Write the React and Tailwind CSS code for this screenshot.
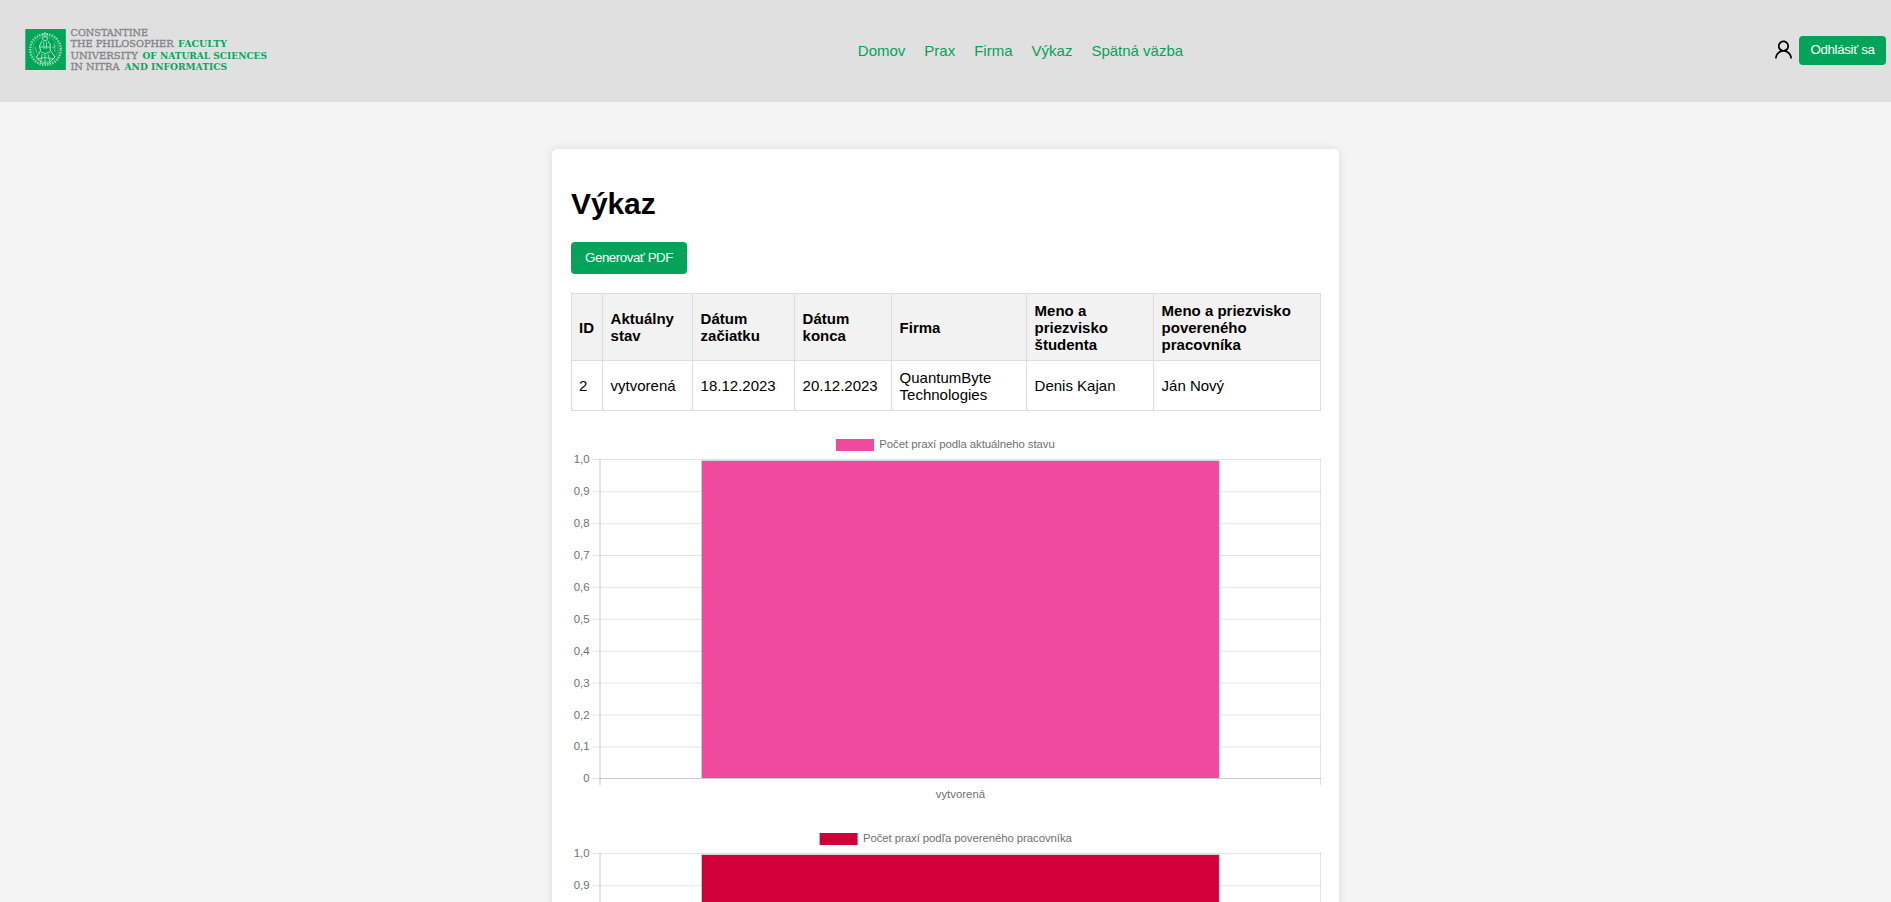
import React from 'react';
import { AiOutlineUser } from 'react-icons/ai';

const NAV = ['Domov', 'Prax', 'Firma', 'Výkaz', 'Spätná väzba'];

const COLUMNS = [
  'ID',
  'Aktuálny stav',
  'Dátum začiatku',
  'Dátum konca',
  'Firma',
  'Meno a priezvisko študenta',
  'Meno a priezvisko povereného pracovníka',
];

const ROWS = [
  ['2', 'vytvorená', '18.12.2023', '20.12.2023', 'QuantumByte Technologies', 'Denis Kajan', 'Ján Nový'],
];

const TICKS = ['1,0', '0,9', '0,8', '0,7', '0,6', '0,5', '0,4', '0,3', '0,2', '0,1', '0'];

const LOGO_TEXT = [
  { x: 45.5, y: 10, w: 77.5, green: false, text: 'CONSTANTINE' },
  { x: 45.5, y: 21.2, w: 103, green: false, text: 'THE PHILOSOPHER' },
  { x: 153, y: 21.2, w: 49, green: true, text: 'FACULTY' },
  { x: 45.5, y: 32.6, w: 67.5, green: false, text: 'UNIVERSITY' },
  { x: 117.5, y: 32.6, w: 124.5, green: true, text: 'OF NATURAL SCIENCES' },
  { x: 45.5, y: 43.8, w: 49, green: false, text: 'IN NITRA' },
  { x: 99.5, y: 43.8, w: 102.5, green: true, text: 'AND INFORMATICS' },
];

function Logo() {
  return (
    <svg width="250" height="50" viewBox="0 0 250 50" className="block overflow-visible">
      <rect x="0.3" y="3" width="40.5" height="41" fill="#00a658" />
      <g fill="none" stroke="#d5f0e0">
        <circle cx="20.5" cy="23.5" r="15.3" strokeWidth="2.6" strokeDasharray="1.5 1.1" opacity="0.65" />
        <circle cx="20.5" cy="23.5" r="12.6" strokeWidth="0.5" opacity="0.5" />
        <circle cx="20" cy="12.5" r="2.4" strokeWidth="1" opacity="0.85" />
        <path d="M17 9.5 L20 6.5 L23 9.5 M17 15 L14.5 20 L15.5 25 L11.5 31 L16 36 M23 15 L25.5 19 L25 24 L30 31 L25 36" strokeWidth="1" opacity="0.85" />
        <path d="M18.5 16 L19 23 M21.5 16 L21.5 23 M15 21 H25 M16 26 Q20 29 25 26 M17 28 L16 36 M20 28 V37 M23 28 L25 36 M12 33 Q20 30 29 33 M15 37 H26" strokeWidth="0.9" opacity="0.75" />
        <path d="M10 21 L12 27 M29 17 L30 26 M27 22 L31 20" strokeWidth="0.8" opacity="0.6" />
      </g>
      {LOGO_TEXT.map((t) => (
        <text
          key={t.text}
          x={t.x}
          y={t.y}
          textLength={t.w}
          lengthAdjust="spacingAndGlyphs"
          fontFamily="'DejaVu Serif', serif"
          fontWeight={t.green ? 700 : 400}
          fontSize="9.7"
          fill={t.green ? '#0aa45c' : '#85868a'}
          stroke={t.green ? 'none' : '#85868a'}
          strokeWidth="0.35"
        >
          {t.text}
        </text>
      ))}
    </svg>
  );
}

function BarChart({ title, color, label, legendX, titleWidth }) {
  const top = 28.5;
  const step = 31.9;
  const bottom = 347.5;
  return (
    <svg
      width="750"
      height="375"
      viewBox="0 0 750 375"
      className="block overflow-visible"
      fontFamily="'Liberation Sans', Arial, sans-serif"
      fontSize="11.4"
      fill="#707070"
    >
      <rect x={legendX} y="8" width="38" height="12" fill={color} />
      <text x={legendX + 43.3} y="17" textLength={titleWidth}>{title}</text>
      {TICKS.map((t, i) => {
        const y = i === 0 ? top : i === 10 ? bottom : top + step * i + 0.3;
        return (
          <g key={t}>
            <rect x="21.5" y={y - 0.5} width="728.5" height="1" fill="#000" fillOpacity="0.1" />
            <text x="18.5" y={y + 3.5} textAnchor="end">{t}</text>
          </g>
        );
      })}
      <rect x="28" y={top - 0.5} width="2" height="326.5" fill="#000" fillOpacity="0.1" />
      <rect x="749" y={top - 0.5} width="1" height="326.5" fill="#000" fillOpacity="0.1" />
      <rect x="28.5" y={bottom - 0.5} width="721.5" height="1" fill="#000" fillOpacity="0.1" />
      <rect x="130" y={top + 0.4} width="518.6" height={bottom - top - 0.9} fill="#000" fillOpacity="0.16" />
      <rect x="130.9" y={top + 1.5} width="517" height={bottom - top - 2} fill={color} />
      <text x="389.4" y="367" textAnchor="middle">{label}</text>
    </svg>
  );
}

export default function App() {
  return (
    <div className="flex h-[902px] flex-col overflow-hidden bg-[#f4f4f4] font-['Liberation_Sans',Arial,sans-serif] text-[15px] leading-[17px] text-black">
      <header className="grid h-[102px] shrink-0 grid-cols-[1fr_auto_1fr] items-center bg-[#e0e0e0] pr-[5px] pl-[25px]">
        <div>
          <Logo />
        </div>
        <nav className="flex gap-[19px] pb-[2px] pl-[130px] text-[#03a359]">
          {NAV.map((n) => (
            <a key={n} href="#">{n}</a>
          ))}
        </nav>
        <div className="flex items-center justify-end pb-[2px]">
          <AiOutlineUser className="mr-[4px] mb-[2px] size-[23px]" />
          <button className="h-[29px] w-[87px] rounded-[4px] bg-[#03a359] pb-[1px] text-[13.3px] tracking-[-0.35px] text-white">Odhlásiť sa</button>
        </div>
      </header>

      <main className="mt-[47px] h-[1100px] w-[787px] shrink-0 self-center rounded-[5px] bg-white px-[19px] pt-[37px] shadow-[0_0_10px_rgba(0,0,0,0.1)]">
        <h1 className="text-[30px] leading-[36px] font-bold tracking-[-0.1px]">Výkaz</h1>
        <button className="mt-[20px] block h-[32px] w-[116px] rounded-[4px] bg-[#03a359] pb-[2px] text-[13.3px] tracking-[-0.45px] text-white">
          Generovať PDF
        </button>
        <table className="mt-[19px] w-[750px] table-fixed border-collapse">
          <colgroup>
            <col className="w-[31px]" />
            <col className="w-[90px]" />
            <col className="w-[102px]" />
            <col className="w-[97px]" />
            <col className="w-[135px]" />
            <col className="w-[127px]" />
            <col className="w-[167px]" />
          </colgroup>
          <thead>
            <tr className="h-[67px] bg-[#f2f2f2]">
              {COLUMNS.map((c) => (
                <th key={c} className="border border-[#dddddd] py-0 pr-[6px] pl-[7.6px] text-left font-bold first:pl-[7px]">{c}</th>
              ))}
            </tr>
          </thead>
          <tbody>
            {ROWS.map((r) => (
              <tr key={r[0]} className="h-[50px]">
                {r.map((c) => (
                  <td key={c} className="border border-[#dddddd] py-0 pr-[6px] pl-[7.6px] first:pl-[7px]">{c}</td>
                ))}
              </tr>
            ))}
          </tbody>
        </table>
        <div className="mt-[20px] flex flex-col gap-[19px]">
          <BarChart title="Počet praxí podla aktuálneho stavu" color="#ef4a9e" label="vytvorená" legendX={265} titleWidth={175.5} />
          <BarChart title="Počet praxí podľa povereného pracovníka" color="#d2003a" label="Ján Nový" legendX={248.6} titleWidth={209} />
        </div>
      </main>
    </div>
  );
}
